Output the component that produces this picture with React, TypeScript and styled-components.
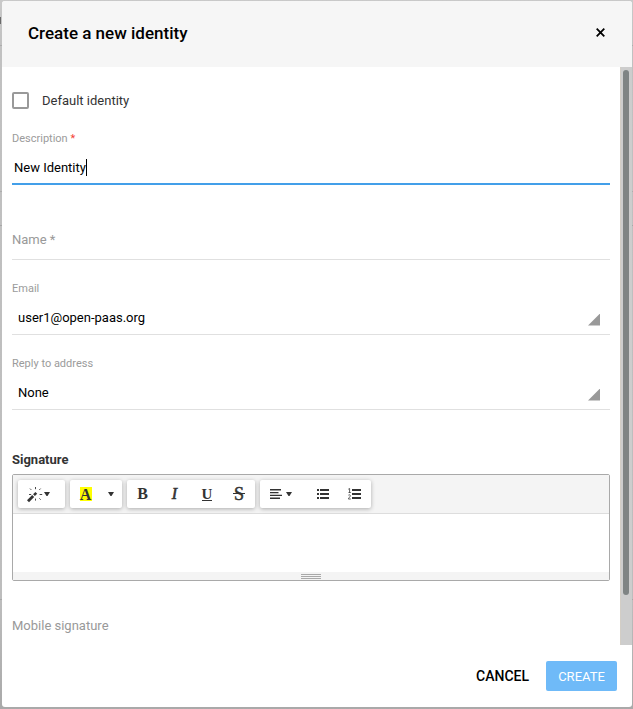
import React from 'react';
import styled, { createGlobalStyle, css } from 'styled-components';

const GlobalStyle = createGlobalStyle`
  *, *::before, *::after { box-sizing: border-box; }
  html, body, #root { height: 100%; }
  body {
    margin: 0;
    overflow: hidden;
    font-family: Roboto, "Liberation Sans", sans-serif;
    font-size: 13px;
    color: #000;
  }
  button, input { font: inherit; color: inherit; }
`;

const Backdrop = styled.div`
  height: 709px;
  width: 633px;
  padding: 1px 1px 2px 2px;
  overflow: hidden;
  background:
    linear-gradient(#adadad, #adadad) 0 45px / 100% 1px no-repeat,
    linear-gradient(#adadad, #adadad) 0 191px / 100% 1px no-repeat,
    linear-gradient(#a8a8a8, #a8a8a8) 0 225px / 100% 1px no-repeat,
    linear-gradient(#a8a8a8, #a8a8a8) 0 599px / 100% 1px no-repeat,
    linear-gradient(#6a6a6a, #6a6a6a) 0 17px / 1px 7px no-repeat,
    linear-gradient(#c9c9c9 0, #c1c1c1 50px, #bdbdbd 600px, #a9a9a9 709px);
`;

const Dialog = styled.section`
  display: flex;
  flex-direction: column;
  width: 630px;
  height: 706px;
  background: #fff;
  border-radius: 3px;
  overflow: hidden;
`;

const Header = styled.header`
  display: flex;
  flex: none;
  align-items: center;
  justify-content: space-between;
  height: 66px;
  padding: 0 27px 2px 26px;
  background: #f6f6f6;
`;

const Title = styled.h1`
  margin: 0;
  font-size: 17px;
  font-weight: 500;
  line-height: 24px;
`;

const CloseButton = styled.button`
  display: flex;
  padding: 0;
  margin-top: -1px;
  border: 0;
  background: none;
`;

const Body = styled.div`
  display: flex;
  flex: none;
  height: 578px;
`;

const Form = styled.form`
  flex: 1;
  padding: 0 10px;
  overflow: hidden;
`;

const ScrollTrack = styled.div`
  width: 12px;
  padding: 3px 3px 0 2px;
  background: #cdcdcd;
  border-left: 1px solid #d3cec6;
`;

const ScrollThumb = styled.div`
  width: 6px;
  height: 525px;
  border-radius: 3px;
  background: #7f8484;
`;

const CheckRow = styled.label`
  display: flex;
  align-items: center;
  gap: 13px;
  height: 17px;
  margin-top: 25px;
  color: #333;
`;

const CheckBox = styled.span`
  width: 17px;
  height: 17px;
  border: 2px solid #999;
  border-radius: 2px;
`;

const Field = styled.div<{ $top: number; $focused?: boolean }>`
  display: flex;
  flex-direction: column;
  margin-top: ${p => p.$top}px;
  border-bottom: ${p => (p.$focused ? '2px solid #439fe9' : '1px solid #e0e0e0')};
`;

const FieldLabel = styled.span`
  height: 14px;
  font-size: 11px;
  line-height: 14px;
  color: #9b9b9b;
`;

const Required = styled.span`
  color: #f44336;
`;

const FieldValue = styled.div<{ $indent: number; $bottom?: number }>`
  display: flex;
  align-items: center;
  justify-content: space-between;
  height: 20px;
  margin: 11px 10px ${p => p.$bottom ?? 7}px 0;
  padding-left: ${p => p.$indent}px;
`;

const Caret = styled.span`
  display: inline-block;
  width: 1px;
  height: 17px;
  vertical-align: -4px;
  background: #000;
`;

const Corner = styled.i`
  width: 12px;
  height: 12px;
  margin-top: 5px;
  background: #999;
  clip-path: polygon(100% 0, 100% 100%, 0 100%);
`;

const Placeholder = styled.div<{ $top: number; $gap?: number }>`
  height: 20px;
  margin-top: ${p => p.$top}px;
  margin-bottom: ${p => p.$gap ?? 0}px;
  line-height: 20px;
  color: #999;
`;

const SignatureLabel = styled.div`
  height: 20px;
  margin-top: 40px;
  font-weight: 700;
  line-height: 20px;
  color: #333;
`;

const Editor = styled.div`
  display: flex;
  flex-direction: column;
  height: 107px;
  margin-top: 4px;
  border: 1px solid #a9a9a9;
  border-radius: 2px;
`;

const Toolbar = styled.div`
  display: flex;
  gap: 5px;
  height: 39px;
  padding: 5px;
  background: #f4f4f4;
  border-bottom: 1px solid #ddd;
`;

const ToolGroup = styled.div<{ $width: number }>`
  display: flex;
  width: ${p => p.$width}px;
  height: 28px;
  background: #fff;
  border-radius: 2px;
  box-shadow: 0 1px 4px rgba(0, 0, 0, 0.3);
`;

const Tool = styled.button<{ $width: number }>`
  display: flex;
  align-items: center;
  justify-content: center;
  width: ${p => p.$width}px;
  height: 28px;
  padding: 0;
  border: 0;
  background: none;
  color: #333;
`;

const Glyph = styled.span<{ $variant?: 'bold' | 'italic' | 'underline' | 'strike' | 'marked' }>`
  font-family: "Liberation Serif", serif;
  font-size: 16px;
  font-weight: 700;
  line-height: 14px;
  ${p => p.$variant === 'italic' && css`font-style: italic; font-weight: 400; -webkit-text-stroke: 0.6px #333;`}
  ${p => p.$variant === 'underline' && css`
    font-size: 15px;
    line-height: 12px;
    height: 13px;
    border-bottom: 1px solid #333;
  `}
  ${p => p.$variant === 'strike' && css`
    font-size: 18px;
    font-weight: 400;
    -webkit-text-stroke: 0.5px #333;
    padding: 0 1px;
    background: linear-gradient(#333, #333) 0 6px / 100% 1px no-repeat;
  `}
  ${p => p.$variant === 'marked' && css`
    width: 12px;
    height: 14px;
    line-height: 15px;
    text-align: center;
    background: #ff0;
  `}
`;

const EditArea = styled.div`
  height: 58px;
  background: #fff;
`;

const ResizeBar = styled.div`
  display: flex;
  flex-direction: column;
  align-items: center;
  gap: 1px;
  height: 8px;
  padding-top: 2px;
  background: #f4f4f4;
`;

const Grip = styled.i`
  width: 20px;
  height: 1px;
  background: #a9a9a9;
`;

const Footer = styled.footer`
  display: flex;
  align-items: center;
  justify-content: flex-end;
  height: 62px;
  padding-right: 15px;
  gap: 4px;
`;

const Cancel = styled.button`
  height: 30px;
  padding: 0 13px 0 12px;
  border: 0;
  background: none;
  font-size: 14px;
  font-weight: 500;
`;

const Create = styled.button`
  width: 71px;
  height: 30px;
  padding: 0;
  border: 0;
  border-radius: 2px;
  background: #6fbaf8;
  color: #fff;
`;

const DownTriangle = () => (
  <svg width="6" height="4" viewBox="0 0 6 4"><path d="M0 0h6L3.5 4h-1z" fill="#333" /></svg>
);

const Wand = () => (
  <svg width="17" height="17" viewBox="0 0 17 17" fill="none" stroke="#333">
    <path d="M1 15.2 6.2 10" strokeWidth="2.8" />
    <path d="M7 9.2 9.3 6.9" strokeWidth="2.6" />
    <path d="M8.5 1v2.2M3 2.6l1.3 1.3M13.6 2.6l-1.3 1.3M2 8.5h2.2M12.6 8.5h2.6M12.4 12.4l1.3 1.3M8.5 12.6v2" strokeWidth=".9" />
  </svg>
);

const AlignLeft = () => (
  <svg width="12" height="10" viewBox="0 0 12 10" stroke="#333" strokeWidth="1.4">
    <path d="M0 .8h11M0 3.6h8.5M0 6.4h12M0 9.2h10" />
  </svg>
);

const BulletList = () => (
  <svg width="12" height="10" viewBox="0 0 12 10" stroke="#333" strokeWidth="1.8">
    <path d="M0 1h2M0 5h2M0 9h2M3 1h9M3 5h9M3 9h9" />
  </svg>
);

const NumberList = () => (
  <svg width="13" height="12" viewBox="0 0 13 12" fill="none" stroke="#333">
    <path d="M4 2h9M4 6h9M4 10h9" strokeWidth="1.8" />
    <path d="M.3 1.2 1.6.5V4.5M.5 4.5h2.3M.4 7.2C1 6.4 2.5 6.7 2.3 7.9 2.2 8.8.5 10 .4 11h2.4" strokeWidth=".8" />
  </svg>
);

const SelectField = ({ label, value }: { label: string; value: string }) => (
  <Field $top={22}>
    <FieldLabel>{label}</FieldLabel>
    <FieldValue $indent={6}>{value}<Corner /></FieldValue>
  </Field>
);

export default function App() {
  return (
    <>
      <GlobalStyle />
      <Backdrop>
        <Dialog>
          <Header>
            <Title>Create a new identity</Title>
            <CloseButton type="button" aria-label="Close">
              <svg width="9" height="9" viewBox="0 0 9 9"><path d="m.7.7 7.6 7.6M8.3.7.7 8.3" stroke="#000" strokeWidth="1.8" /></svg>
            </CloseButton>
          </Header>
          <Body>
            <Form>
              <CheckRow><CheckBox />Default identity</CheckRow>
              <Field $top={23} $focused>
                <FieldLabel>Description <Required>*</Required></FieldLabel>
                <FieldValue $indent={2} $bottom={6}><span>New Identity<Caret /></span></FieldValue>
              </Field>
              <Field $top={0}>
                <Placeholder $top={45} $gap={9}>Name *</Placeholder>
              </Field>
              <SelectField label="Email" value="user1@open-paas.org" />
              <SelectField label="Reply to address" value="None" />
              <SignatureLabel>Signature</SignatureLabel>
              <Editor>
                <Toolbar>
                  <ToolGroup $width={47}>
                    <Tool type="button" $width={41}><Wand /><DownTriangle /></Tool>
                  </ToolGroup>
                  <ToolGroup $width={52}>
                    <Tool type="button" $width={31}><Glyph $variant="marked">A</Glyph></Tool>
                    <Tool type="button" $width={20}><DownTriangle /></Tool>
                  </ToolGroup>
                  <ToolGroup $width={128}>
                    <Tool type="button" $width={31}><Glyph $variant="bold">B</Glyph></Tool>
                    <Tool type="button" $width={33}><Glyph $variant="italic">I</Glyph></Tool>
                    <Tool type="button" $width={32}><Glyph $variant="underline">U</Glyph></Tool>
                    <Tool type="button" $width={32}><Glyph $variant="strike">S</Glyph></Tool>
                  </ToolGroup>
                  <ToolGroup $width={111}>
                    <Tool type="button" $width={42}><AlignLeft />&nbsp;<DownTriangle /></Tool>
                    <Tool type="button" $width={42}><BulletList /></Tool>
                    <Tool type="button" $width={21}><NumberList /></Tool>
                  </ToolGroup>
                </Toolbar>
                <EditArea />
                <ResizeBar><Grip /><Grip /><Grip /></ResizeBar>
              </Editor>
              <Placeholder $top={35}>Mobile signature</Placeholder>
            </Form>
            <ScrollTrack><ScrollThumb /></ScrollTrack>
          </Body>
          <Footer>
            <Cancel type="button">CANCEL</Cancel>
            <Create type="button">CREATE</Create>
          </Footer>
        </Dialog>
      </Backdrop>
    </>
  );
}
